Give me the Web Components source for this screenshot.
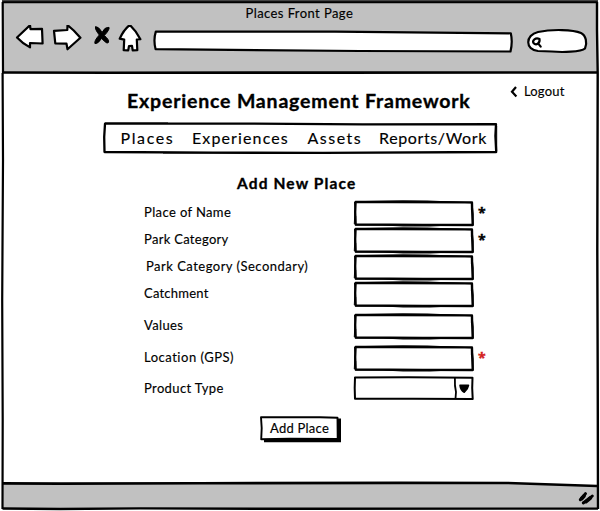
<!DOCTYPE html>
<html lang="en">
<head>
<meta charset="utf-8">
<title>Places Front Page</title>
<style>
  html, body { margin: 0; background: #fff; }
  body { width: 600px; height: 511px; overflow: hidden; font: 13px Lato, "Open Sans", sans-serif; color: #000; }
</style>
</head>
<body>
<places-page></places-page>
<script>
const define = (name, html, after) => {
  const template = document.createElement('template');
  template.innerHTML = html;
  customElements.define(name, class extends HTMLElement {
    connectedCallback() {
      if (this.shadowRoot) return;
      this.attachShadow({ mode: 'open' }).append(template.content.cloneNode(true));
      if (after) after(this);
    }
  });
};

/* One line of lettering, tracked so that it fills the measure in "w". */
define('sketch-text', `
  <style>
    :host { display: block; white-space: nowrap; flex: none; }
    span { display: inline-block; -webkit-text-stroke: var(--ink, .15px) currentColor; }
  </style><span><slot></slot></span>`, el => {
  const span = el.shadowRoot.querySelector('span');
  const want = +el.getAttribute('w');
  el.style.fontSize = el.getAttribute('size') + 'px';
  if (want) {
    el.style.width = want + 'px';
    const n = el.textContent.length;
    span.style.letterSpacing = (want - .7 - span.getBoundingClientRect().width) / (n - 1) + 'px';
  }
});

define('browser-toolbar', `
  <style>
    :host { display: block; height: 73px; }
    .title { height: 25px; padding-left: 245.5px; line-height: 26px; }
    .bar { display: flex; align-items: flex-start; }
    svg { display: block; flex: none; fill: #fff; stroke: #000; stroke-width: 2.2; stroke-linejoin: round; stroke-linecap: round; }
  </style>
  <div class="title"><sketch-text size="13" w="108">Places Front Page</sketch-text></div>
  <div class="bar">
    <svg width="50" height="30" viewBox="0 25 50 30"><path d="M17 37.5 L30 25.2 L30.5 29.2 L42 28.8 L42.6 43.5 L30 43 L30 47.4 Q22 43 17 37.5Z"/></svg>
    <svg width="38" height="30" viewBox="50 25 38 30"><path d="M54 30.8 L67.3 30 L67.5 25.2 Q74 30 80.4 37.7 L67.5 49.3 L66.5 43.7 L55.3 43.5Z"/></svg>
    <svg width="26" height="30" viewBox="88 25 26 30"><path fill="#000" stroke-width="1" d="M95.5 27 Q98.5 26 102 32.5 Q104.5 27 109 27.3 Q110 29.5 104.3 35.5 Q109.5 40 108.5 42 Q108 45.3 101.6 38.4 Q98 44 95 43.7 Q93.8 41 99.3 35 Q94.5 29 95.5 27Z"/></svg>
    <svg width="34" height="30" viewBox="114 24 34 30"><path transform="translate(0 -.8)" d="M119.7 38.5 Q124 29 129.8 24.8 Q136 30.5 140.4 39 L136.8 39.3 L137.3 50 L132.7 50.2 L132 45.6 L129 45.8 L128.2 50.2 L123.7 50 L124.2 39.4Z"/></svg>
    <svg width="374" height="36" viewBox="148 25 374 36"><path d="M155.8 31.6 L335 31.7 L510.8 33.3 Q512.8 42 510.5 51.5 L360 51 L155.6 49.2 Q153.2 40 155.8 31.6Z"/></svg>
    <svg width="78" height="36" viewBox="522 25 78 36"><path d="M538 51 C525 50 525 35 538 32 C552 29 573 29.5 581 33 C586 35.5 587.5 43 585 48.5 C581 52 562 52.5 552 51.5Z"/><path fill="none" stroke-width="2.2" d="M539.5 39 C535.5 37 532 40.5 533.5 43 C536 45.8 540.3 43.5 539.5 39 M538.5 43.8 L540.7 46.7"/></svg>
  </div>`);

/* Window chrome: uneven inked outline around toolbar, content and status bar. */
define('browser-window', `
  <style>
    :host { display: grid; grid-template-rows: 73px 1fr 26px; position: relative; isolation: isolate; width: 600px; height: 511px; }
    .ink { position: absolute; inset: 0; z-index: -1; }
    footer { display: flex; justify-content: flex-end; align-items: center; padding-right: 5px; }
  </style>
  <svg class="ink" width="600" height="511" fill="none" stroke="#000" stroke-linejoin="round">
    <path fill="#c1c1c1" stroke="none" d="M3 2H597V72H3Z M3 483.5 L520 483 L597 486 V509H3Z"/>
    <path stroke="#444" stroke-width="2" d="M2 1 H598"/>
    <path stroke-width="2" d="M2.5 2.3 H597.5"/>
    <path stroke-width="2.2" d="M2.7 2 L3 73 M2.6 73 L3 160 L2.2 300 L2.7 420 L2.5 509"/>
    <path stroke-width="2.4" d="M597 2 V30 L597.7 73 L597.3 250 L597.7 370 L598 509"/>
    <path stroke-width="2.6" d="M3 72.5 L110 72.8 L340 72.6 L597 72.5"/>
    <path stroke-width="2.6" d="M3 483.4 L60 483.6 L200 483.2 L400 482.9 L508 483 L597 486"/>
    <path stroke-width="2.4" d="M2.5 508.5 L60 509 L140 508.4 L300 508.8 L598 508.6"/>
  </svg>
  <browser-toolbar></browser-toolbar>
  <main><slot></slot></main>
  <footer><svg width="18" height="16" viewBox="577 490 18 16" fill="none" stroke="#000" stroke-linecap="round"><path stroke-width="3" d="M585.5 493.7 Q583 497 580.3 499.7 M592.3 496 Q588 500 583.3 502.9"/><path stroke-width="3.8" d="M584 496L581.6 498.6 M590.3 498L586 501.5"/></svg></footer>`);

define('nav-box', `
  <style>
    :host { display: grid; width: 395px; height: 32px; }
    svg, nav { grid-area: 1 / 1; }
    nav { display: flex; align-items: center; padding-left: 17.5px; line-height: 30px; height: 32px; }
  </style>
  <svg width="395" height="32" fill="#fff" stroke="#000" stroke-linejoin="round">
    <path stroke-width="2.3" d="M2 1.7 L150 1.6 L260 2.3 L393 2.2 L392.4 14 L393.2 30 L220 30.8 L110 30.7 L1.5 30 L1.2 15Z"/>
    <path fill="none" stroke-width="1" d="M2 1 H65 M60 31 H170 M393.7 4 V29"/>
  </svg>
  <nav><slot></slot></nav>`);

define('text-field', `
  <style>:host { display: block; width: 122px; height: 27px; } svg { display: block; overflow: visible; }</style>
  <svg width="122" height="27" fill="none" stroke="#000" stroke-linejoin="round">
    <path fill="#fff" stroke-width="2.3" d="M2.6 1.8 L40 2 L119 2.4 L119.2 12 L119.7 25 L70 24.9 L2.6 24.5 L2.2 12Z"/>
    <path stroke-width="1" d="M2 1.7 L50 .8 L75 1 L119 2.8 L120.2 14 L120.2 25.5 M2 25 L30 25 L50 26 L77 26 L90 25.4 L119 25.5 M1.5 2 L2 9 L1.3 24 M2.7 16V24 M118.4 3 V10"/>
  </svg>`);

define('select-field', `
  <style>:host { display: block; width: 122px; height: 25px; } svg { display: block; }</style>
  <svg width="122" height="25" fill="none" stroke="#000" stroke-linejoin="round">
    <path fill="#fff" stroke-width="2" d="M2 1.6 L55 1.2 L119.5 1.7 L119.2 12 L119.7 23 L60 22.8 L2 22.7 L1.7 12Z"/>
    <path stroke-width="1.8" d="M101.9 2 Q101.5 10 103 16 L102.5 22.5"/>
    <path fill="#000" stroke-width="1.5" d="M107 9.3 L115.5 9.3 Q115 13 111.3 16.3 Q107.5 14 107 9.3Z"/>
  </svg>`);

define('form-row', `
  <style>
    :host { display: grid; grid-template-columns: 209px 122px 1fr; height: 27px; line-height: 23px; }
    .mark { padding-left: 3px; font: bold 14px/25px "Open Sans", sans-serif; -webkit-text-stroke: .4px currentColor; }
    ::slotted(sketch-text) { padding-top: .5px; }
  </style>
  <slot name="label"></slot><slot></slot><div class="mark"><slot name="mark"></slot></div>`);

define('action-button', `
  <style>
    :host { display: grid; width: 82px; height: 27px; }
    svg, div { grid-area: 1 / 1; }
    div { padding-left: 10px; line-height: 25px; }
  </style>
  <svg width="82" height="27"><path d="M4 24 H78 V2.5 H81 V26.3 H4Z"/><path fill="#fff" stroke="#000" stroke-width="1.9" stroke-linejoin="round" d="M1 1.2 L60 1.2 L77.5 1.7 L77.7 23 L30 22.7 L1.2 23.3 L1.7 12Z"/></svg>
  <div><slot></slot></div>`);

define('places-page', `
  <style>
    :host { display: block; }
    .top { display: grid; grid-template-columns: 127px 382px 1fr; height: 49px; }
    h1, h2 { --ink: .35px; }
    .top h1 { margin: 0; font-weight: bold; line-height: 56px; grid-column: 2; }
    .logout { display: flex; gap: 6px; line-height: 36px; }
    .logout svg { margin-top: 12px; }
    nav-box { margin-left: 103px; }
    .experiences { margin-left: 18.5px; } .assets { margin-left: 19px; } .reports { margin-left: 17.5px; }
    h2 { margin: 0; padding: 18px 0 0 237px; height: 28px; font-weight: bold; line-height: 22px; }
    form { display: grid; padding-left: 144px; }
    .loose { margin-top: 5px; }
    .secondary { padding-left: 2px; }
    .product { margin-top: 4px; line-height: 22px; }
    action-button { margin: 13px 0 0 260px; }
    .red { color: #d32020; }
  </style>
  <browser-window>
    <div class="top">
      <h1><sketch-text size="19.5" w="343.5">Experience Management Framework</sketch-text></h1>
      <div class="logout"><svg width="9" height="13" fill="none" stroke="#000" stroke-width="2.2"><path d="M7 2 L3 6.7 L7.4 11.4"/></svg><sketch-text size="13" w="41">Logout</sketch-text></div>
    </div>
    <nav-box>
      <sketch-text size="16" w="53">Places</sketch-text>
      <sketch-text class="experiences" size="16" w="96.5">Experiences</sketch-text>
      <sketch-text class="assets" size="16" w="54">Assets</sketch-text>
      <sketch-text class="reports" size="16" w="108">Reports/Work</sketch-text>
    </nav-box>
    <h2><sketch-text size="15.5" w="119">Add New Place</sketch-text></h2>
    <form>
      <form-row><sketch-text slot="label" size="13" w="87.5">Place of Name</sketch-text><text-field></text-field><span slot="mark">*</span></form-row>
      <form-row><sketch-text slot="label" size="13" w="85">Park Category</sketch-text><text-field></text-field><span slot="mark">*</span></form-row>
      <form-row><sketch-text class="secondary" slot="label" size="13" w="162.5">Park Category (Secondary)</sketch-text><text-field></text-field></form-row>
      <form-row><sketch-text slot="label" size="13" w="65">Catchment</sketch-text><text-field></text-field></form-row>
      <form-row class="loose"><sketch-text slot="label" size="13" w="39.5">Values</sketch-text><text-field></text-field></form-row>
      <form-row class="loose"><sketch-text slot="label" size="13" w="90.5">Location (GPS)</sketch-text><text-field></text-field><span slot="mark" class="red">*</span></form-row>
      <form-row class="product"><sketch-text slot="label" size="13" w="80">Product Type</sketch-text><select-field></select-field></form-row>
    </form>
    <action-button><sketch-text size="13" w="59.5">Add Place</sketch-text></action-button>
  </browser-window>`);
</script>
</body>
</html>
